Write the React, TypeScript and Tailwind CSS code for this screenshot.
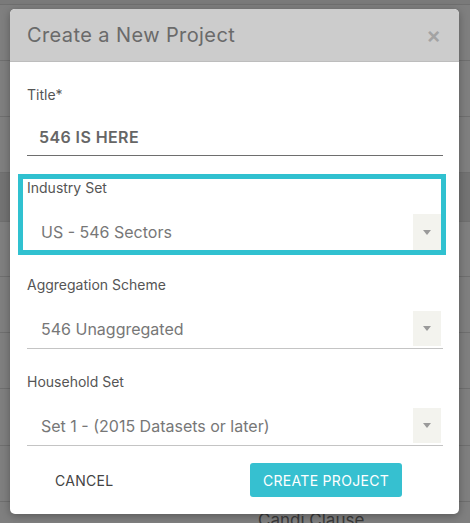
import React from "react";

const font = { fontFamily: "Inter, 'Open Sans', sans-serif" };

function Arrow() {
  return (
    <div className="w-[28px] h-[35px] bg-[#f3f3ee] flex items-center justify-center">
      <svg width="8" height="5" viewBox="0 0 8 5">
        <path d="M0 0 L8 0 L4 5 Z" fill="#9a9a9a" />
      </svg>
    </div>
  );
}

function SelectField({ label, value }: { label: string; value: string }) {
  return (
    <div className="flex flex-col">
      <div className="h-[20px] leading-[20px] text-[14px] text-[#555]">{label}</div>
      <div className="mt-[16px] h-[38px] border-b border-[#c4c4c4] flex items-start">
        <div className="flex-1 h-[35px] flex items-center pl-[14px] text-[16px] text-[#777]">{value}</div>
        <div className="mr-[2px]">
          <Arrow />
        </div>
      </div>
    </div>
  );
}

export default function App() {
  const rows = [5, 56, 56, 56, 49, 55, 56, 56, 57, 56, 21];
  return (
    <div className="relative w-[470px] h-[523px] overflow-hidden bg-[#7f7f7f]" style={font}>
      <div className="flex flex-col">
        {rows.map((h, i) => (
          <div
            key={i}
            className={`border-b border-[#6f6f6f] ${i === 4 ? "bg-[#737373]" : i === 0 ? "bg-[#7a7a7a]" : "bg-[#7f7f7f]"} ${i === 10 ? "border-b-0" : ""}`}
            style={{ height: h }}
          >
            {i === 10 && (
              <div className="pl-[258px] pt-[8px] text-[17px] leading-[20px] text-[#3a3a3a] whitespace-nowrap">Candi Clause</div>
            )}
          </div>
        ))}
      </div>

      <div className="absolute left-[10px] top-[9px] w-[449px] h-[505px] rounded-[5px] bg-white overflow-hidden shadow-[0_2px_8px_rgba(0,0,0,0.3)]">
        <div className="h-[53px] bg-[#cccccc] border-b border-[#bdbdbd] flex items-center justify-between pl-[17px] pr-[18px]">
          <div className="text-[20px] text-[#6a6a6a] tracking-[0.4px]">Create a New Project</div>
          <div className="text-[22px] font-semibold text-[#a3a3a3] leading-none">×</div>
        </div>

        <div className="pl-[17px] pr-[16px] flex flex-col">
          <div className="mt-[23px] h-[20px] leading-[20px] text-[14px] text-[#555]">Title*</div>
          <div className="mt-[20px] pb-[6px] border-b border-[#6e6e6e] pl-[12px] h-[31px] text-[16px] leading-[24px] font-semibold text-[#666] tracking-[0.4px]">
            546 IS HERE
          </div>

          <div className="mt-[18px] ml-[-9px] mr-[-3px] border-[5px] border-[#30c1d0] pl-[4px] flex flex-col">
            <div className="h-[18px] leading-[18px] text-[14px] text-[#555] mt-[0px]">Industry Set</div>
            <div className="mt-[17px] h-[36px] flex items-end">
              <div className="flex-1 h-[36px] flex items-center pl-[14px] text-[16px] text-[#777]">US - 546 Sectors</div>
              <div className="w-[28px] h-[36px] bg-[#f3f3ee] flex items-center justify-center">
                <svg width="8" height="5" viewBox="0 0 8 5">
                  <path d="M0 0 L8 0 L4 5 Z" fill="#9a9a9a" />
                </svg>
              </div>
            </div>
          </div>

          <div className="mt-[20px]">
            <SelectField label="Aggregation Scheme" value="546 Unaggregated" />
          </div>
          <div className="mt-[23px]">
            <SelectField label="Household Set" value="Set 1 - (2015 Datasets or later)" />
          </div>

          <div className="mt-[17px] flex items-center">
            <div className="ml-[28px] text-[14px] text-[#444] tracking-[0.3px]">CANCEL</div>
            <div className="ml-auto mr-[41px] w-[152px] h-[34px] rounded-[3px] bg-[#36c0d0] flex items-center justify-center text-white text-[14px] tracking-[0.3px]">
              CREATE PROJECT
            </div>
          </div>
        </div>
      </div>
    </div>
  );
}
